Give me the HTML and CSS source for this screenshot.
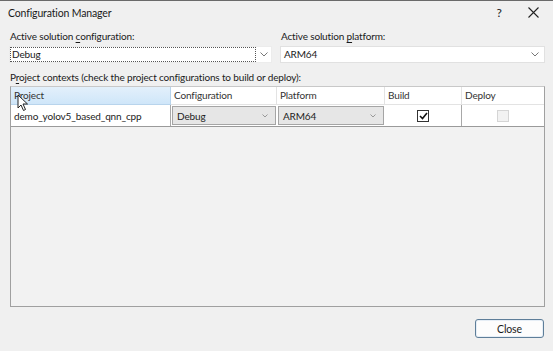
FILE: index.html
```html
<!DOCTYPE html>
<html>
<head>
<meta charset="utf-8">
<link rel="stylesheet" href="styles.css">
</head>
<body>
<div class="window">
  <div class="titlebar">
    <span class="title">Configuration Manager</span>
    <span class="tb-btns">
      <span class="tb-help">?</span>
      <span class="tb-close"><svg width="11" height="11" viewBox="0 0 11 11"><path d="M0.5 0.5 L10.5 10.5 M10.5 0.5 L0.5 10.5" stroke="#222" stroke-width="1.1" fill="none"/></svg></span>
    </span>
  </div>
  <div class="content">
    <div class="top-row">
      <div class="field">
        <label class="lbl">Active solution <u>c</u>onfiguration:</label>
        <div class="combo combo-cfg">
          <span class="combo-text"><span class="focus">Debug</span></span>
          <span class="chev"><svg width="8" height="5" viewBox="0 0 8 5"><path d="M0.5 0.5 L4 4 L7.5 0.5" stroke="#777" fill="none"/></svg></span>
        </div>
      </div>
      <div class="field">
        <label class="lbl">Active solution <u>p</u>latform:</label>
        <div class="combo combo-plat">
          <span class="combo-text">ARM64</span>
          <span class="chev"><svg width="8" height="5" viewBox="0 0 8 5"><path d="M0.5 0.5 L4 4 L7.5 0.5" stroke="#777" fill="none"/></svg></span>
        </div>
      </div>
    </div>
    <div class="lbl ctx-lbl">P<u>r</u>oject contexts (check the project configurations to build or deploy):</div>
    <div class="grid">
      <div class="hrow">
        <div class="hcell hot">Project</div>
        <div class="hcell">Configuration</div>
        <div class="hcell">Platform</div>
        <div class="hcell">Build</div>
        <div class="hcell">Deploy</div>
      </div>
      <div class="drow">
        <div class="dcell">demo_yolov5_based_qnn_cpp</div>
        <div class="dcell cbo"><span>Debug</span><svg width="6" height="4" viewBox="0 0 6 4"><path d="M0.5 0.5 L3 3 L5.5 0.5" stroke="#999" fill="none"/></svg></div>
        <div class="dcell cbo"><span>ARM64</span><svg width="6" height="4" viewBox="0 0 6 4"><path d="M0.5 0.5 L3 3 L5.5 0.5" stroke="#999" fill="none"/></svg></div>
        <div class="dcell center"><span class="chk on"><svg width="9" height="8" viewBox="0 0 9 8"><path d="M1 4 L3.5 6.5 L8 1" stroke="#111" stroke-width="1.6" fill="none"/></svg></span></div>
        <div class="dcell center"><span class="chk off"></span></div>
      </div>
      <svg class="cursor" width="12" height="18" viewBox="0 0 12 18"><path d="M1 1 L1 14 L4 11 L6.5 16.5 L8.5 15.5 L6 10 L10.5 10 Z" fill="#fff" stroke="#222" stroke-width="1"/></svg>
    </div>
    <div class="footer">
      <button class="btn">Close</button>
    </div>
  </div>
</div>
</body>
</html>
```
FILE: styles.css
```css
* { box-sizing: border-box; }
html, body { margin: 0; padding: 0; }
body {
  width: 553px;
  height: 351px;
  overflow: hidden;
  background: #f0f0f0;
  font-family: Lato, "Open Sans", sans-serif;
  font-size: 10px;
  letter-spacing: -0.15px;
  color: #1a1a1a;
}
.window {
  width: 553px;
  height: 351px;
  border-top: 1px solid #6a6a6a;
  background: #f0f0f0;
}
.titlebar {
  height: 23px;
  display: flex;
  align-items: center;
  justify-content: space-between;
  padding-left: 8px;
}
.title { font-size: 10.5px; }
.tb-btns { display: flex; align-items: center; }
.tb-help { width: 16px; text-align: center; font-size: 12px; margin-right: 21px; }
.tb-close { width: 12px; display: flex; margin-right: 13px; }
.content { padding: 5px 8px 0 9px; }
.top-row {
  display: grid;
  grid-template-columns: 263px 265px;
  column-gap: 8px;
}
.field { display: flex; flex-direction: column; }
.lbl { display: block; height: 15px; line-height: 15px; padding-left: 1px; }
.lbl u { text-decoration: underline; text-underline-offset: 2px; }
.combo {
  margin-top: 2px;
  height: 17px;
  display: flex;
  align-items: center;
  background: #fff;
  border: 1px solid #e1e1e1;
}
.combo-cfg { border-color: #ececec; }
.combo-text { flex: 1; padding-left: 1px; line-height: 13px; display: flex; height: 100%; }
.focus {
  flex: 1;
  border: 1px dotted #555;
  padding-left: 1px;
  line-height: 13px;
  margin-right: 0;
}
.combo-cfg .combo-text { padding-left: 0; }
.combo-plat .combo-text { padding-left: 3px; line-height: 15px; }
.chev { width: 18px; display: flex; justify-content: center; align-items: center; }
.combo-cfg .chev { width: 15px; }
.ctx-lbl { margin-top: 7px; }
.grid {
  position: relative;
  margin-top: 1px;
  margin-left: 1px;
  width: 535px;
  height: 221px;
  border: 1px solid #a0a0a0;
  border-top-color: #c8c8c8;
  background: #f2f2f2;
}
.hrow, .drow {
  display: grid;
  grid-template-columns: 160px 106px 108px 77px 82px;
}
.hrow { height: 18px; }
.hcell {
  background: #fff;
  border-right: 1px solid #e3e3e3;
  border-bottom: 1px solid #e3e3e3;
  padding-left: 3px;
  line-height: 17px;
  color: #333;
}
.hcell.hot {
  background: linear-gradient(#e3f0fb, #cfe6f9);
  border-right-color: #b8d4ec;
  border-bottom-color: #b8d4ec;
}
.hcell:last-child { border-right: none; }
.drow { height: 22px; background: #fff; border-bottom: 1px solid #9a9a9a; }
.dcell {
  border-right: 1px solid #a8a8a8;
  padding-left: 3px;
  display: flex;
  align-items: center;
  color: #222;
}
.dcell:last-child { border-right: none; }
.dcell.cbo {
  background: #e6e6e6;
  border: 1px solid #a5a5a5;
  margin: 1px;
  justify-content: space-between;
  padding-right: 7px;
  padding-left: 4px;
}
.center { justify-content: center; padding-left: 0; }
.chk {
  width: 12px; height: 12px;
  display: flex; align-items: center; justify-content: center;
}
.chk.on { border: 1px solid #333; background: #fff; }
.chk.off { border: 1px solid #d5d5d5; background: #f2f2f2; }
.cursor { position: absolute; left: 6px; top: 7px; }
.footer {
  display: flex;
  justify-content: flex-end;
  padding-top: 12px;
  padding-right: 1px;
}
.btn {
  width: 69px;
  height: 19px;
  font-family: inherit;
  font-size: 10.5px;
  letter-spacing: -0.1px;
  color: #1a1a1a;
  background: #fdfdfd;
  border: 1px solid #5e7e99;
  border-radius: 3px;
  box-shadow: inset 0 0 0 1px #e6eef6;
  padding: 0;
}
```
